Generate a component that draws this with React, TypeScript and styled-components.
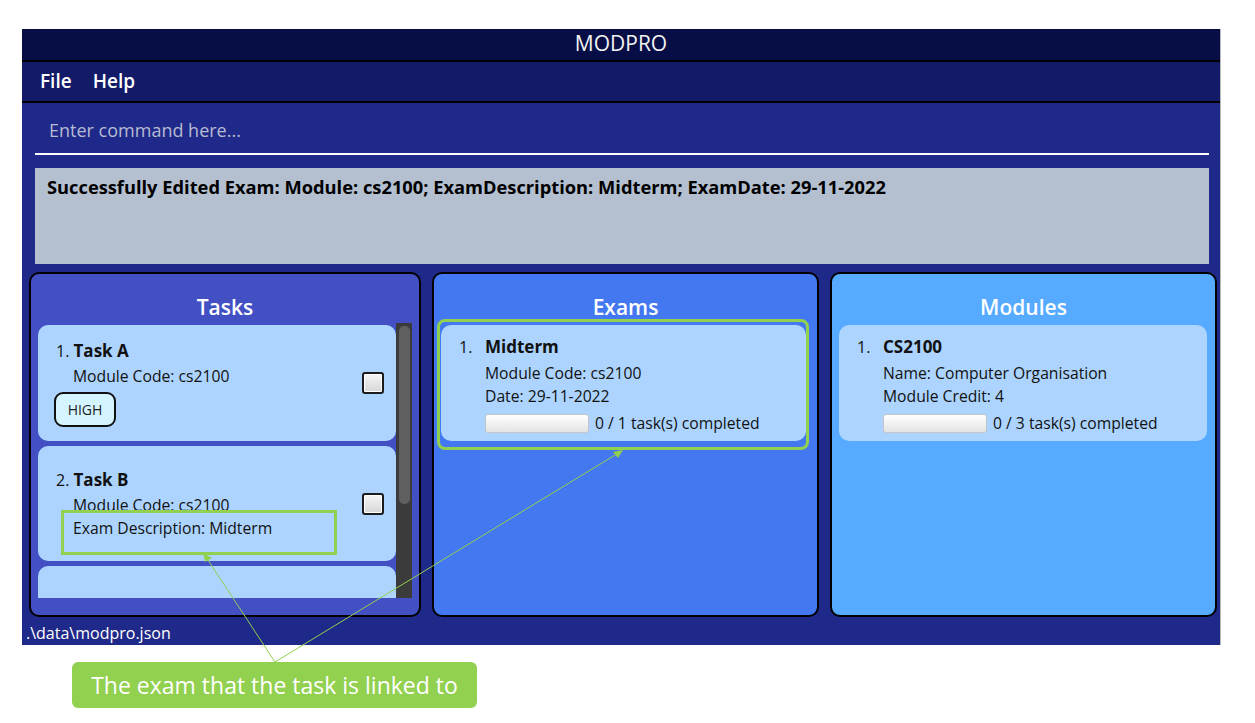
import React from 'react';
import styled, { createGlobalStyle } from 'styled-components';

const GlobalStyle = createGlobalStyle`
  body {
    margin: 0;
    background: #ffffff;
    font-family: 'Open Sans', 'Noto Sans', sans-serif;
  }
`;

const Page = styled.div`
  position: relative;
  width: 1255px;
  height: 723px;
  padding: 29px 0 0 22px;
  box-sizing: border-box;
  overflow: hidden;
`;

const Window = styled.div`
  width: 1199px;
  height: 616px;
  display: flex;
  flex-direction: column;
  background: #1f2989;
  border-right: 1px solid #b8b8b8;
  box-sizing: border-box;
`;

const TitleBar = styled.div`
  height: 33px;
  display: flex;
  align-items: center;
  justify-content: center;
  padding-bottom: 3px;
  background: #070e45;
  border-bottom: 2px solid #000;
  box-sizing: border-box;
  color: #f2f2f2;
  font-size: 21px;
`;

const MenuBar = styled.div`
  height: 41px;
  display: flex;
  align-items: center;
  gap: 21px;
  padding: 0 0 2px 18px;
  background: #131a68;
  border-bottom: 2px solid #000;
  box-sizing: border-box;
  color: #fff;
  font-size: 19px;
  font-weight: 600;
`;

const CommandBox = styled.div`
  height: 52px;
  margin: 0 11px 0 13px;
  display: flex;
  align-items: center;
  padding: 4px 0 0 14px;
  border-bottom: 2px solid #fff;
  box-sizing: border-box;
  color: #b7bbd2;
  font-size: 18px;
`;

const ResultBox = styled.div`
  height: 96px;
  margin: 13px 11px 0 13px;
  padding: 6px 12px;
  background: #b4c0d0;
  box-sizing: border-box;
  color: #000;
  font-size: 18.3px;
  font-weight: 700;
`;

const Panels = styled.div`
  display: grid;
  grid-template-columns: 392px 387px 387px;
  column-gap: 11px;
  height: 345px;
  margin: 8px 0 0 7px;
`;

const Panel = styled.div<{ $bg: string }>`
  display: flex;
  flex-direction: column;
  background: ${(p) => p.$bg};
  border: 2px solid #000;
  border-radius: 10px;
  box-sizing: border-box;
  overflow: hidden;
`;

const PanelTitle = styled.div`
  height: 31px;
  margin-top: 18px;
  text-align: center;
  color: #fff;
  font-size: 21px;
  font-weight: 600;
  line-height: 31px;
`;

const ListArea = styled.div<{ $right: number }>`
  display: flex;
  height: 275px;
  padding: 0 ${(p) => p.$right}px 0 7px;
`;

const CardColumn = styled.div<{ $clip?: boolean }>`
  flex: 1;
  display: flex;
  flex-direction: column;
  gap: 5px;
  padding-top: 2px;
  overflow: ${(p) => (p.$clip ? 'hidden' : 'visible')};
`;

const ScrollTrack = styled.div`
  width: 16px;
  padding: 3px 2px 0 3px;
  background: #3b3b3b;
  box-sizing: border-box;
`;

const ScrollThumb = styled.div`
  height: 178px;
  background: #5f5f5f;
  border-radius: 5px;
`;

const Card = styled.div<{ $height: number; $highlight?: boolean }>`
  position: relative;
  flex-shrink: 0;
  height: ${(p) => p.$height}px;
  display: flex;
  align-items: center;
  background: #acd4ff;
  border-radius: 10px;
  box-sizing: border-box;
  color: #111;
  font-size: 15.7px;

  ${(p) =>
    p.$highlight &&
    `
    &::after {
      content: '';
      position: absolute;
      left: -4px;
      top: -6px;
      right: -3px;
      bottom: -9px;
      border: 3px solid #92d050;
      border-radius: 8px;
    }
  `}
`;

const TaskBody = styled.div`
  flex: 1;
  display: flex;
  flex-direction: column;
  padding-left: 16px;
`;

const TaskTitle = styled.div`
  height: 26px;
  line-height: 24px;
  padding-left: 2px;
  font-size: 16px;

  b {
    font-size: 17px;
  }
`;

const Line = styled.div<{ $indent: number }>`
  height: 23px;
  line-height: 23px;
  padding-left: ${(p) => p.$indent}px;
  white-space: nowrap;
`;

const LinkedLine = styled(Line)`
  position: relative;
  z-index: 1;

  &::before {
    content: '';
    position: absolute;
    z-index: -1;
    left: 7px;
    top: -7px;
    width: 276px;
    height: 45px;
    border: 3px solid #92d050;
    background: #acd4ff;
    box-sizing: border-box;
  }
`;

const Badge = styled.div`
  width: 62px;
  height: 35px;
  margin-top: 4px;
  display: flex;
  align-items: center;
  justify-content: center;
  background: #d4f5ff;
  border: 2px solid #111;
  border-radius: 9px;
  box-sizing: border-box;
  color: #222;
  font-size: 14px;
`;

const CheckBox = styled.div`
  width: 22px;
  height: 22px;
  margin-right: 12px;
  background: linear-gradient(#f6f6f6, #d6d6d6);
  border: 2px solid #1c1c1c;
  border-radius: 3px;
  box-shadow: inset 0 0 0 1px #ffffff;
  box-sizing: border-box;
`;

const ItemBody = styled.div`
  flex: 1;
  display: grid;
  grid-template-columns: 26px 1fr;
  align-items: center;
  padding: 0 0 0 18px;
  align-self: flex-start;
  margin-top: 10px;
`;

const ItemNumber = styled.div`
  font-size: 16px;
  line-height: 24px;
  margin-bottom: 3px;
`;

const ItemTitle = styled.div`
  font-size: 17px;
  font-weight: 700;
  line-height: 24px;
  margin-bottom: 3px;
`;

const Detail = styled.div`
  grid-column: 2;
  line-height: 23px;
  white-space: nowrap;
`;

const ProgressRow = styled.div`
  grid-column: 2;
  display: flex;
  align-items: center;
  gap: 6px;
  margin-top: 4px;
  white-space: nowrap;
`;

const ProgressBar = styled.div`
  width: 104px;
  height: 19px;
  background: linear-gradient(#ffffff, #e4e4e4);
  border: 1px solid #c6c6c6;
  border-radius: 3px;
  box-sizing: border-box;
`;

const StatusBar = styled.div`
  flex: 1;
  display: flex;
  align-items: center;
  padding: 3px 0 0 4px;
  color: #fff;
  font-size: 16px;
`;

const Callout = styled.div`
  width: 405px;
  height: 46px;
  margin: 17px 0 0 50px;
  display: flex;
  align-items: center;
  justify-content: center;
  background: #92d050;
  border-radius: 6px;
  color: #fff;
  font-size: 23px;
`;

const Arrows = styled.svg`
  position: absolute;
  left: 0;
  top: 0;
  pointer-events: none;
`;

const App = (): React.ReactElement => {
  return (
    <Page>
      <GlobalStyle />
      <Window>
        <TitleBar>MODPRO</TitleBar>
        <MenuBar>
          <span>File</span>
          <span>Help</span>
        </MenuBar>
        <CommandBox>Enter command here...</CommandBox>
        <ResultBox>
          Successfully Edited Exam: Module: cs2100; ExamDescription: Midterm; ExamDate: 29-11-2022
        </ResultBox>
        <Panels>
          <Panel $bg='#4350c4'>
            <PanelTitle>Tasks</PanelTitle>
            <ListArea $right={7}>
              <CardColumn $clip>
                <Card $height={116}>
                  <TaskBody>
                    <TaskTitle>
                      1. <b>Task A</b>
                    </TaskTitle>
                    <Line $indent={19}>Module Code: cs2100</Line>
                    <Badge>HIGH</Badge>
                  </TaskBody>
                  <CheckBox />
                </Card>
                <Card $height={115}>
                  <TaskBody>
                    <TaskTitle>
                      2. <b>Task B</b>
                    </TaskTitle>
                    <Line $indent={19}>Module Code: cs2100</Line>
                    <LinkedLine $indent={19}>Exam Description: Midterm</LinkedLine>
                  </TaskBody>
                  <CheckBox />
                </Card>
                <Card $height={115} />
              </CardColumn>
              <ScrollTrack>
                <ScrollThumb />
              </ScrollTrack>
            </ListArea>
          </Panel>
          <Panel $bg='#4478f0'>
            <PanelTitle>Exams</PanelTitle>
            <ListArea $right={11}>
              <CardColumn>
                <Card $height={116} $highlight>
                  <ItemBody>
                    <ItemNumber>1.</ItemNumber>
                    <ItemTitle>Midterm</ItemTitle>
                    <Detail>Module Code: cs2100</Detail>
                    <Detail>Date: 29-11-2022</Detail>
                    <ProgressRow>
                      <ProgressBar />0 / 1 task(s) completed
                    </ProgressRow>
                  </ItemBody>
                </Card>
              </CardColumn>
            </ListArea>
          </Panel>
          <Panel $bg='#56aaff'>
            <PanelTitle>Modules</PanelTitle>
            <ListArea $right={8}>
              <CardColumn>
                <Card $height={116}>
                  <ItemBody>
                    <ItemNumber>1.</ItemNumber>
                    <ItemTitle>CS2100</ItemTitle>
                    <Detail>Name: Computer Organisation</Detail>
                    <Detail>Module Credit: 4</Detail>
                    <ProgressRow>
                      <ProgressBar />0 / 3 task(s) completed
                    </ProgressRow>
                  </ItemBody>
                </Card>
              </CardColumn>
            </ListArea>
          </Panel>
        </Panels>
        <StatusBar>.\data\modpro.json</StatusBar>
      </Window>
      <Callout>The exam that the task is linked to</Callout>
      <Arrows width={1255} height={723} viewBox='0 0 1255 723'>
        <g stroke='#92d050' strokeWidth={1} fill='#92d050'>
          <line x1={275} y1={662} x2={206} y2={557} />
          <line x1={275} y1={662} x2={620} y2={452} />
          <polygon points='203,553 212,558 205,562' stroke='none' />
          <polygon points='623,450 618,458 613,452' stroke='none' />
        </g>
      </Arrows>
    </Page>
  );
};

export default App;
